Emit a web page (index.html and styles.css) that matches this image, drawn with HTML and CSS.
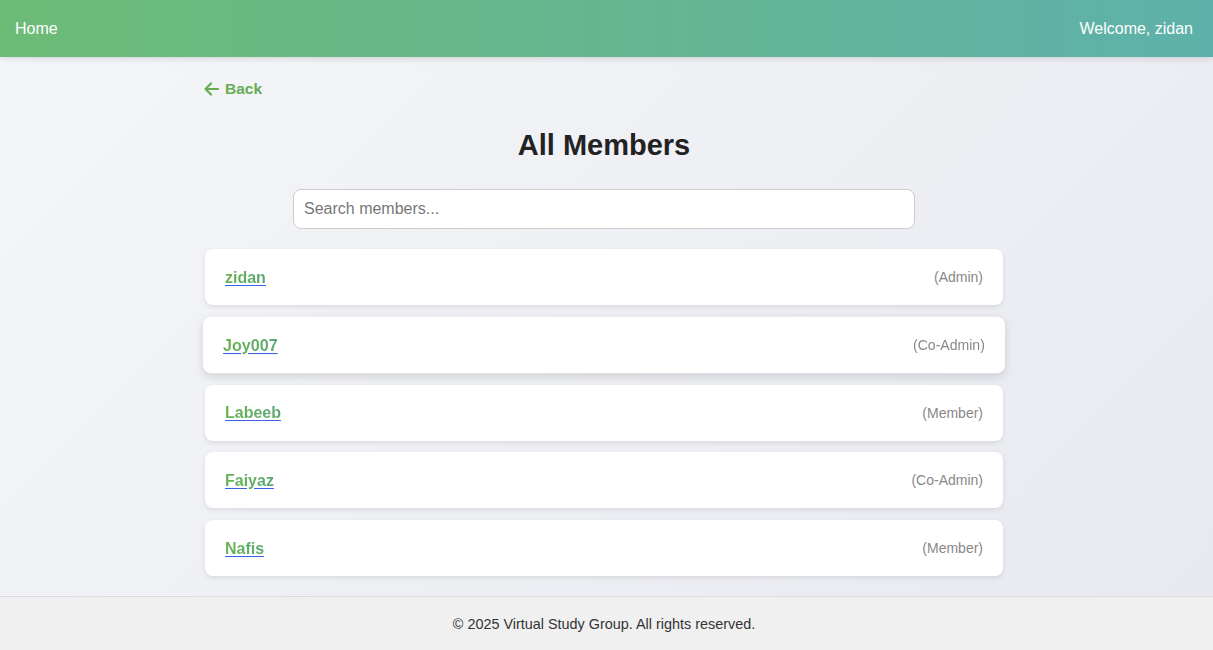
FILE: index.html
```html
<!DOCTYPE html>
<html>
<head>
<meta charset="utf-8">
<link rel="stylesheet" href="styles.css">
</head>
<body>
<header class="topbar">
  <a class="nav-link" href="#">Home</a>
  <span class="welcome">Welcome, zidan</span>
</header>
<main class="page">
  <div class="container">
    <a class="back" href="#">
      <svg class="back-icon" viewBox="0 0 16 16" width="16" height="16"><path d="M15 8H2.5M8 2.5L2.5 8L8 13.5" fill="none" stroke="currentColor" stroke-width="2.2" stroke-linecap="round" stroke-linejoin="round"/></svg>
      <span>Back</span>
    </a>
    <h1 class="title">All Members</h1>
    <div class="search-row">
      <input class="search" type="text" placeholder="Search members...">
    </div>
    <ul class="members">
      <li class="card"><a class="name" href="#">zidan</a><span class="role">(Admin)</span></li>
      <li class="card card-hover"><a class="name" href="#">Joy007</a><span class="role">(Co-Admin)</span></li>
      <li class="card"><a class="name" href="#">Labeeb</a><span class="role">(Member)</span></li>
      <li class="card"><a class="name" href="#">Faiyaz</a><span class="role">(Co-Admin)</span></li>
      <li class="card"><a class="name" href="#">Nafis</a><span class="role">(Member)</span></li>
    </ul>
  </div>
</main>
<footer class="footer">© 2025 Virtual Study Group. All rights reserved.</footer>
</body>
</html>
```
FILE: styles.css
```css
* { box-sizing: border-box; }
html, body { margin: 0; padding: 0; height: 100%; }
body {
  font-family: "Liberation Sans", Arial, sans-serif;
  display: flex;
  flex-direction: column;
  min-height: 650px;
  background: linear-gradient(135deg, #f5f6f9 0%, #e8e9ef 100%);
}
.topbar {
  height: 57px;
  flex: none;
  display: flex;
  align-items: center;
  justify-content: space-between;
  padding: 0 20px 0 15px;
  background: linear-gradient(90deg, #6dbb77 0%, #5db1aa 100%);
  box-shadow: 0 2px 6px rgba(0,0,0,0.12);
  color: #fff;
  font-size: 16px;
  position: relative;
  z-index: 2;
}
.nav-link { color: #fff; text-decoration: none; }
.welcome { color: #fff; }
.page {
  flex: 1;
  padding: 0 5px 0 0;
}
.container {
  width: 800px;
  margin: 0 auto;
  padding-top: 23px;
}
.back {
  display: inline-flex;
  align-items: center;
  gap: 6px;
  margin-left: -1px;
  color: #66ac55;
  font-weight: bold;
  font-size: 15.5px;
  text-decoration: none;
  height: 18px;
}
.back-icon { display: block; }
.title {
  margin: 28px 0 0;
  text-align: center;
  font-size: 29px;
  font-weight: bold;
  color: #222;
  line-height: 33px;
}
.search-row {
  display: flex;
  justify-content: center;
  margin-top: 27px;
}
.search {
  width: 622px;
  height: 40px;
  border: 1px solid #ccc;
  border-radius: 8px;
  padding: 0 10px;
  font-family: "Liberation Sans", Arial, sans-serif;
  font-size: 16px;
  background: #fff;
  color: #333;
  outline: none;
}
.search::placeholder { color: #777; }
.members {
  list-style: none;
  margin: 20px 0 0;
  padding: 0 1px;
  display: flex;
  flex-direction: column;
  gap: 11.75px;
}
.card {
  height: 56px;
  background: #fff;
  border-radius: 8px;
  box-shadow: 0 2px 5px rgba(0,0,0,0.09);
  display: flex;
  align-items: center;
  justify-content: space-between;
  padding: 0 20px;
}
.card-hover {
  transform: scale(1.005);
  box-shadow: 0 3px 9px rgba(0,0,0,0.13);
}
.name {
  font-weight: bold;
  font-size: 16px;
  color: #3a62e8;
  text-decoration: underline;
  text-decoration-color: #3a62e8;
  text-underline-offset: 2px;
  background: linear-gradient(90deg, #6ab34f, #5aa775);
  -webkit-background-clip: text;
  background-clip: text;
  -webkit-text-fill-color: transparent;
  padding-top: 1px;
}
.role {
  font-size: 14px;
  color: #888;
}
.footer {
  flex: none;
  height: 54px;
  background: #f0f0f0;
  border-top: 1px solid #dadada;
  display: flex;
  align-items: center;
  justify-content: center;
  padding-right: 5px;
  font-size: 14.4px;
  color: #333;
}
```
